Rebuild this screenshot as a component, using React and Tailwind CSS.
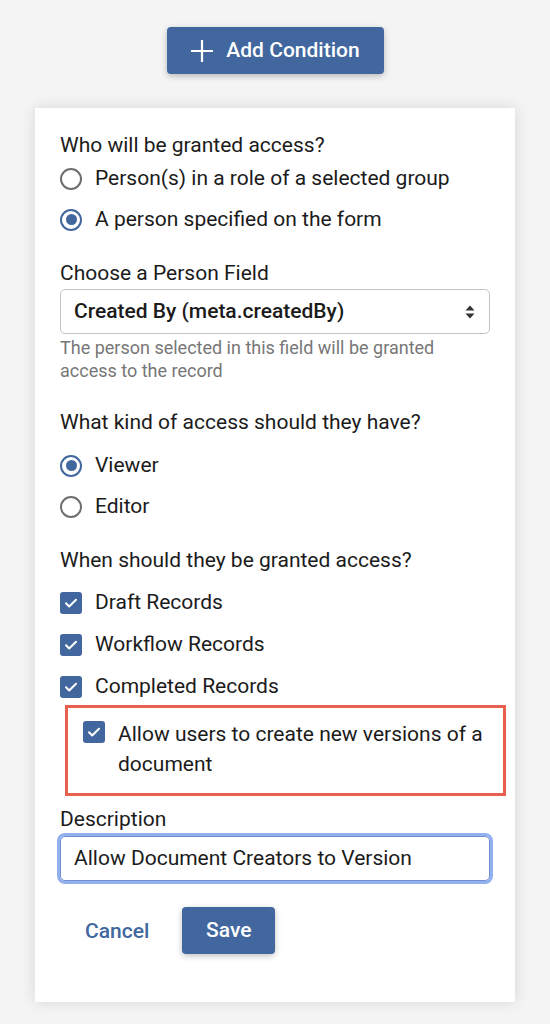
import React from 'react';

const BLUE = 'bg-[#41679e]';

const Radio = ({ checked, label }) => (
  <div className="flex items-center h-[41px]">
    {checked ? (
      <span className="w-[22px] h-[22px] rounded-full border-[2.5px] border-[#41679e] flex items-center justify-center">
        <span className="w-[11px] h-[11px] rounded-full bg-[#41679e]" />
      </span>
    ) : (
      <span className="w-[22px] h-[22px] rounded-full border-[2.5px] border-[#6e6e6e]" />
    )}
    <span className="ml-[13px]">{label}</span>
  </div>
);

const CheckBox = () => (
  <span className={`w-[22px] h-[22px] shrink-0 rounded-[3px] ${BLUE} flex items-center justify-center`}>
    <svg width="16" height="16" viewBox="0 0 16 16" fill="none">
      <path d="M3 8.3l3.2 3.2L13 4.7" stroke="white" strokeWidth="2" strokeLinecap="round" strokeLinejoin="round" />
    </svg>
  </span>
);

const Check = ({ label }) => (
  <div className="flex items-center h-[42px]">
    <CheckBox />
    <span className="ml-[13px]">{label}</span>
  </div>
);

export default function App() {
  return (
    <div className="min-h-screen bg-[#f4f4f4] flex flex-col items-center pt-[27px] text-[#1b1b1b] text-[21px]" style={{ fontFamily: 'Roboto, "Liberation Sans", sans-serif' }}>
      <button className={`${BLUE} h-[47px] w-[217px] rounded-[4px] shadow-[0_2px_6px_rgba(0,0,0,0.25)] text-white text-[21px] font-medium flex items-center justify-center gap-[12px] pt-[1px]`}>
        <svg width="24" height="24" viewBox="0 0 24 24" fill="none">
          <path d="M12 1v22M1 12h22" stroke="white" strokeWidth="2.2" />
        </svg>
        Add Condition
      </button>

      <div className="mt-[34px] w-[480px] h-[894px] bg-white shadow-[0_0_14px_rgba(0,0,0,0.12)] pt-[24px] px-[25px]">
        <div className="leading-[26px]">Who will be granted access?</div>
        <Radio label="Person(s) in a role of a selected group" />
        <Radio checked label="A person specified on the form" />

        <div className="leading-[26px] mt-[20px]">Choose a Person Field</div>
        <div className="mt-[3px] h-[45px] border border-[#c4c4c4] rounded-[5px] flex items-center justify-between pl-[13px] pr-[14px]">
          <span className="font-medium">Created By (meta.createdBy)</span>
          <svg width="10" height="16" viewBox="0 0 10 16">
            <path d="M5 1.5L9.5 6.5H0.5Z M5 14.5L9.5 9.5H0.5Z" fill="#333" />
          </svg>
        </div>
        <div className="mt-[2px] text-[18px] leading-[23px] text-[#777]">
          The person selected in this field will be granted<br />access to the record
        </div>

        <div className="leading-[26px] mt-[27px]">What kind of access should they have?</div>
        <div className="mt-[10px]">
          <Radio checked label="Viewer" />
          <Radio label="Editor" />
        </div>

        <div className="leading-[26px] mt-[20px]">When should they be granted access?</div>
        <div className="mt-[9px]">
          <Check label="Draft Records" />
          <Check label="Workflow Records" />
          <Check label="Completed Records" />
        </div>

        <div className="-mt-[3px] ml-[5px] w-[441px] h-[91px] border-[3px] border-[#e8614f] flex pl-[15px] pt-[13px]">
          <CheckBox />
          <div className="ml-[13px] leading-[30px] -mt-[2px]">Allow users to create new versions of a document</div>
        </div>

        <div className="leading-[26px] mt-[10px]">Description</div>
        <div className="mt-[4px] h-[45px] border border-[#6f8fd3] rounded-[5px] ring-[3px] ring-[#93b0ee] flex items-center pl-[13px]">
          Allow Document Creators to Version
        </div>

        <div className="mt-[26px] flex items-center">
          <button className="ml-[25px] text-[#41679e] font-medium pt-[2px]">Cancel</button>
          <button className={`ml-[33px] ${BLUE} h-[47px] w-[93px] rounded-[4px] shadow-[0_2px_6px_rgba(0,0,0,0.25)] text-white font-medium pt-[1px]`}>Save</button>
        </div>
      </div>
    </div>
  );
}
